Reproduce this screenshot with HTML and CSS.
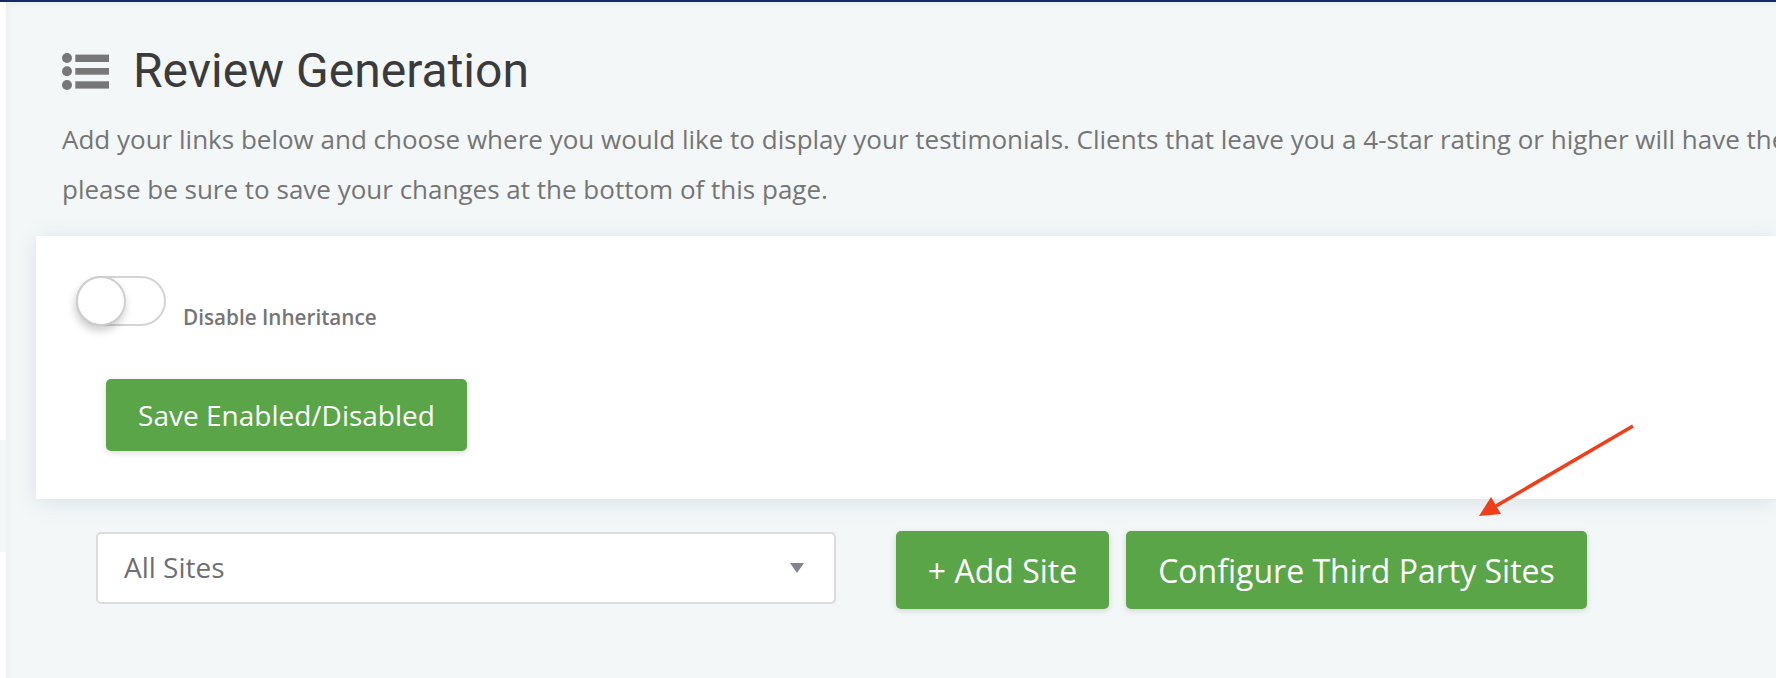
FILE: index.html
```html
<!DOCTYPE html>
<html lang="en">
<head>
    <meta charset="UTF-8">
    <meta name="viewport" content="width=device-width, initial-scale=1.0">
    <title>Review Generation</title>
    <link rel="stylesheet" href="styles.css">
</head>
<body>
    <div class="topbar"></div>
    <div class="layout">
        <div class="sidebar">
            <div class="sidebar-mark"></div>
        </div>
        <div class="main">
            <div class="intro">
                <h1 class="title">
                    <svg class="title-icon" viewBox="0 0 47 37" aria-hidden="true">
                        <circle cx="5" cy="5" r="5"/>
                        <circle cx="5" cy="18.3" r="5"/>
                        <circle cx="5" cy="32" r="5"/>
                        <rect x="13.3" y="1.6" width="33.7" height="7.4"/>
                        <rect x="13.3" y="15" width="33.7" height="6.7"/>
                        <rect x="13.3" y="28.3" width="33.7" height="7.3"/>
                    </svg>
                    <span class="title-text">Review Generation</span>
                </h1>
                <p class="lead">Add your links below and choose where you would like to display your testimonials. Clients that leave you a 4-star rating or higher will have the<br>please be sure to save your changes at the bottom of this page.</p>
            </div>
            <div class="card">
                <div class="toggle-row">
                    <span class="toggle"><span class="toggle-knob"></span></span>
                    <span class="toggle-label">Disable Inheritance</span>
                </div>
                <button class="btn btn-save">Save Enabled/Disabled</button>
            </div>
            <div class="actions">
                <div class="select">
                    <span class="select-value">All Sites</span>
                    <span class="select-caret"></span>
                </div>
                <button class="btn btn-add">+ Add Site</button>
                <button class="btn btn-config">Configure Third Party Sites</button>
            </div>
            <svg class="arrow" viewBox="0 0 170 105" aria-hidden="true">
                <line x1="163" y1="6" x2="26" y2="86" stroke="#ef3e19" stroke-width="3.5"/>
                <polygon points="9,96 21,77 31,94" fill="#ef3e19"/>
            </svg>
        </div>
    </div>
</body>
</html>
```

FILE: styles.css
```css
* {
    box-sizing: border-box;
}

html, body {
    height: 100%;
}

body {
    margin: 0;
    overflow: hidden;
    background-color: #f3f7f8;
    font-family: "Open Sans", Arial, sans-serif;
    color: #757575;
}

.topbar {
    height: 2px;
    background-color: #142b66;
}

.layout {
    display: flex;
    height: 676px;
}

.sidebar {
    flex: 0 0 6px;
    background-color: #fff;
    padding-top: 438px;
}

.sidebar-mark {
    height: 112px;
    background-color: #f3f7f8;
}

.main {
    flex: 1;
    position: relative;
    min-width: 0;
    overflow: hidden;
    box-shadow: inset 3px 5px 6px -3px rgba(0, 0, 0, 0.05);
}

.intro {
    padding: 43px 0 0 56px;
    white-space: nowrap;
}

.title {
    display: flex;
    align-items: center;
    gap: 24px;
    margin: 0 0 19px;
    height: 50px;
    font-family: Roboto, Arial, sans-serif;
    font-size: 48px;
    font-weight: 400;
    color: #3b3b3b;
}

.title-icon {
    width: 47px;
    height: 37px;
    margin-top: 2px;
    fill: #777;
}

.lead {
    margin: 0;
    font-size: 26px;
    line-height: 50px;
}

.card {
    height: 263px;
    margin: 22px 0 0 30px;
    padding: 40px 0 0 40px;
    background-color: #fff;
    box-shadow: 0 3px 20px rgba(80, 100, 130, 0.15);
}

.toggle-row {
    display: flex;
    align-items: flex-start;
    gap: 17px;
}

.toggle {
    position: relative;
    display: block;
    width: 90px;
    height: 50px;
    border: 2px solid #d4d4d4;
    border-radius: 25px;
    background-color: #fff;
}

.toggle-knob {
    position: absolute;
    left: -2px;
    top: -2px;
    width: 50px;
    height: 50px;
    border: 2px solid #cfcfcf;
    border-radius: 50%;
    background-color: #fff;
    box-shadow: -1px 5px 8px rgba(0, 0, 0, 0.2);
}

.toggle-label {
    margin-top: 28px;
    font-size: 20.7px;
    font-weight: 600;
    line-height: 26px;
}

.btn {
    padding: 0;
    border: 0;
    border-radius: 5px;
    background-color: #5aa548;
    color: #fff;
    font-family: "Open Sans", Arial, sans-serif;
    box-shadow: 0 2px 6px rgba(0, 0, 0, 0.14);
    cursor: pointer;
}

.btn-save {
    display: block;
    width: 361px;
    height: 72px;
    margin: 49px 0 0 30px;
    font-size: 28px;
}

.actions {
    display: flex;
    align-items: flex-start;
    margin: 32px 0 0 90px;
}

.select {
    display: flex;
    align-items: center;
    justify-content: space-between;
    width: 740px;
    height: 72px;
    margin: 1px 60px 0 0;
    padding: 0 30px 0 26px;
    border: 2px solid #dcdcdf;
    border-radius: 5px;
    background-color: #fff;
    font-size: 28px;
    color: #6f6f6f;
}

.select-value {
    margin-bottom: 2px;
}

.select-caret {
    width: 0;
    height: 0;
    border-left: 7px solid transparent;
    border-right: 7px solid transparent;
    border-top: 10px solid #7f868c;
}

.btn-add {
    width: 213px;
    height: 78px;
    margin-right: 17px;
    font-size: 32px;
}

.btn-config {
    width: 461px;
    height: 78px;
    font-size: 32px;
}

.arrow {
    position: absolute;
    left: 1464px;
    top: 418px;
    width: 170px;
    height: 105px;
}
```
